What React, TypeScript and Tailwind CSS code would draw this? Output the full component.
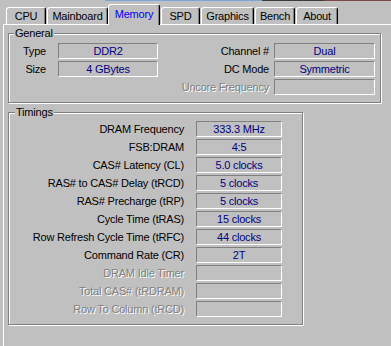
import React from "react";

const rowsT: { label: string; value: string; disabled?: boolean }[] = [
  { label: "DRAM Frequency", value: "333.3 MHz" },
  { label: "FSB:DRAM", value: "4:5" },
  { label: "CAS# Latency (CL)", value: "5.0 clocks" },
  { label: "RAS# to CAS# Delay (tRCD)", value: "5 clocks" },
  { label: "RAS# Precharge (tRP)", value: "5 clocks" },
  { label: "Cycle Time (tRAS)", value: "15 clocks" },
  { label: "Row Refresh Cycle Time (tRFC)", value: "44 clocks" },
  { label: "Command Rate (CR)", value: "2T" },
  { label: "DRAM Idle Timer", value: "", disabled: true },
  { label: "Total CAS# (tRDRAM)", value: "", disabled: true },
  { label: "Row To Column (tRCD)", value: "", disabled: true },
];

const boxCls =
  "h-[16px] border border-t-[#808080] border-l-[#808080] border-r-white border-b-white flex items-center justify-center text-[#000080] leading-none whitespace-nowrap";
const disabledCls = "text-[#808080] [text-shadow:1px_1px_0_#ffffff]";
const inactiveTab =
  "h-[17px] border-l border-t border-r border-l-white border-t-white border-r-black rounded-t-[3px] shadow-[inset_-1px_0_0_#808080] flex items-center justify-center pt-[1px] text-black leading-none";

export default function App() {
  return (
    <div className="w-[391px] h-[346px] overflow-hidden bg-[#c0c0c0] text-[11px] tracking-[-0.2px] font-['Liberation_Sans',Arial,sans-serif] text-black">
      <div className="flex h-[1px]">
        <div className="w-[105px]" />
        <div className="w-[157px] bg-[#7aa7d6]" />
        <div className="w-[62px] bg-[#3c3c3c]" />
        <div className="flex-1 bg-[#7a4848]" />
      </div>
      <div className="flex items-end h-[23px] pl-[6px]">
        <div className={inactiveTab + " w-[40px]"}>CPU</div>
        <div className={inactiveTab + " w-[61px] ml-[1px]"}>Mainboard</div>
        <div className="relative z-10 h-[21px] w-[52px] -mb-[1px] bg-[#c0c0c0] border-l border-t border-r border-l-white border-t-white border-r-black rounded-t-[3px] shadow-[inset_-1px_0_0_#808080] flex items-center justify-center pb-[1px] text-[#0000ff] leading-none">
          Memory
        </div>
        <div className={inactiveTab + " w-[39px] ml-[1px]"}>SPD</div>
        <div className={inactiveTab + " w-[53px] ml-[1px]"}>Graphics</div>
        <div className={inactiveTab + " w-[40px] ml-[1px]"}>Bench</div>
        <div className={inactiveTab + " w-[42px] ml-[1px]"}>About</div>
      </div>
      <div className="ml-[3px] w-[420px] h-[330px] border-t border-l border-white">
        {/* General */}
        <div className="relative ml-[4px] mt-[8px] w-[373px] border border-[#808080] shadow-[inset_1px_1px_0_#fff,1px_1px_0_#fff] pt-[9px] pb-[7px] flex flex-col gap-[2px]">
          <span className="absolute left-[5px] -top-[8px] px-[1px] bg-[#c0c0c0] leading-[14px]">General</span>
          <div className="flex items-center h-[16px]">
            <span className="w-[37px] text-right">Type</span>
            <div className={boxCls + " ml-[12px] w-[100px]"}>DDR2</div>
            <span className="w-[111px] text-right">Channel #</span>
            <div className={boxCls + " ml-[5px] w-[101px]"}>Dual</div>
          </div>
          <div className="flex items-center h-[16px]">
            <span className="w-[37px] text-right">Size</span>
            <div className={boxCls + " ml-[12px] w-[100px]"}>4 GBytes</div>
            <span className="w-[111px] text-right">DC Mode</span>
            <div className={boxCls + " ml-[5px] w-[101px]"}>Symmetric</div>
          </div>
          <div className="flex items-center h-[16px]">
            <span className="w-[37px]" />
            <div className="ml-[12px] w-[100px]" />
            <span className={"w-[111px] text-right whitespace-nowrap " + disabledCls}>Uncore Frequency</span>
            <div className={boxCls + " ml-[5px] w-[101px]"} />
          </div>
        </div>
        {/* Timings */}
        <div className="relative ml-[4px] mt-[9px] w-[295px] border border-[#808080] shadow-[inset_1px_1px_0_#fff,1px_1px_0_#fff] pt-[8px] pb-[7px] flex flex-col gap-[2px]">
          <span className="absolute left-[6px] -top-[8px] px-[1px] bg-[#c0c0c0] leading-[14px]">Timings</span>
          {rowsT.map((r) => (
            <div key={r.label} className="flex items-center h-[16px]">
              <span className={"w-[175px] text-right whitespace-nowrap " + (r.disabled ? disabledCls : "")}>{r.label}</span>
              <div className={boxCls + " ml-[12px] w-[86px]"}>{r.value}</div>
            </div>
          ))}
        </div>
      </div>
    </div>
  );
}
